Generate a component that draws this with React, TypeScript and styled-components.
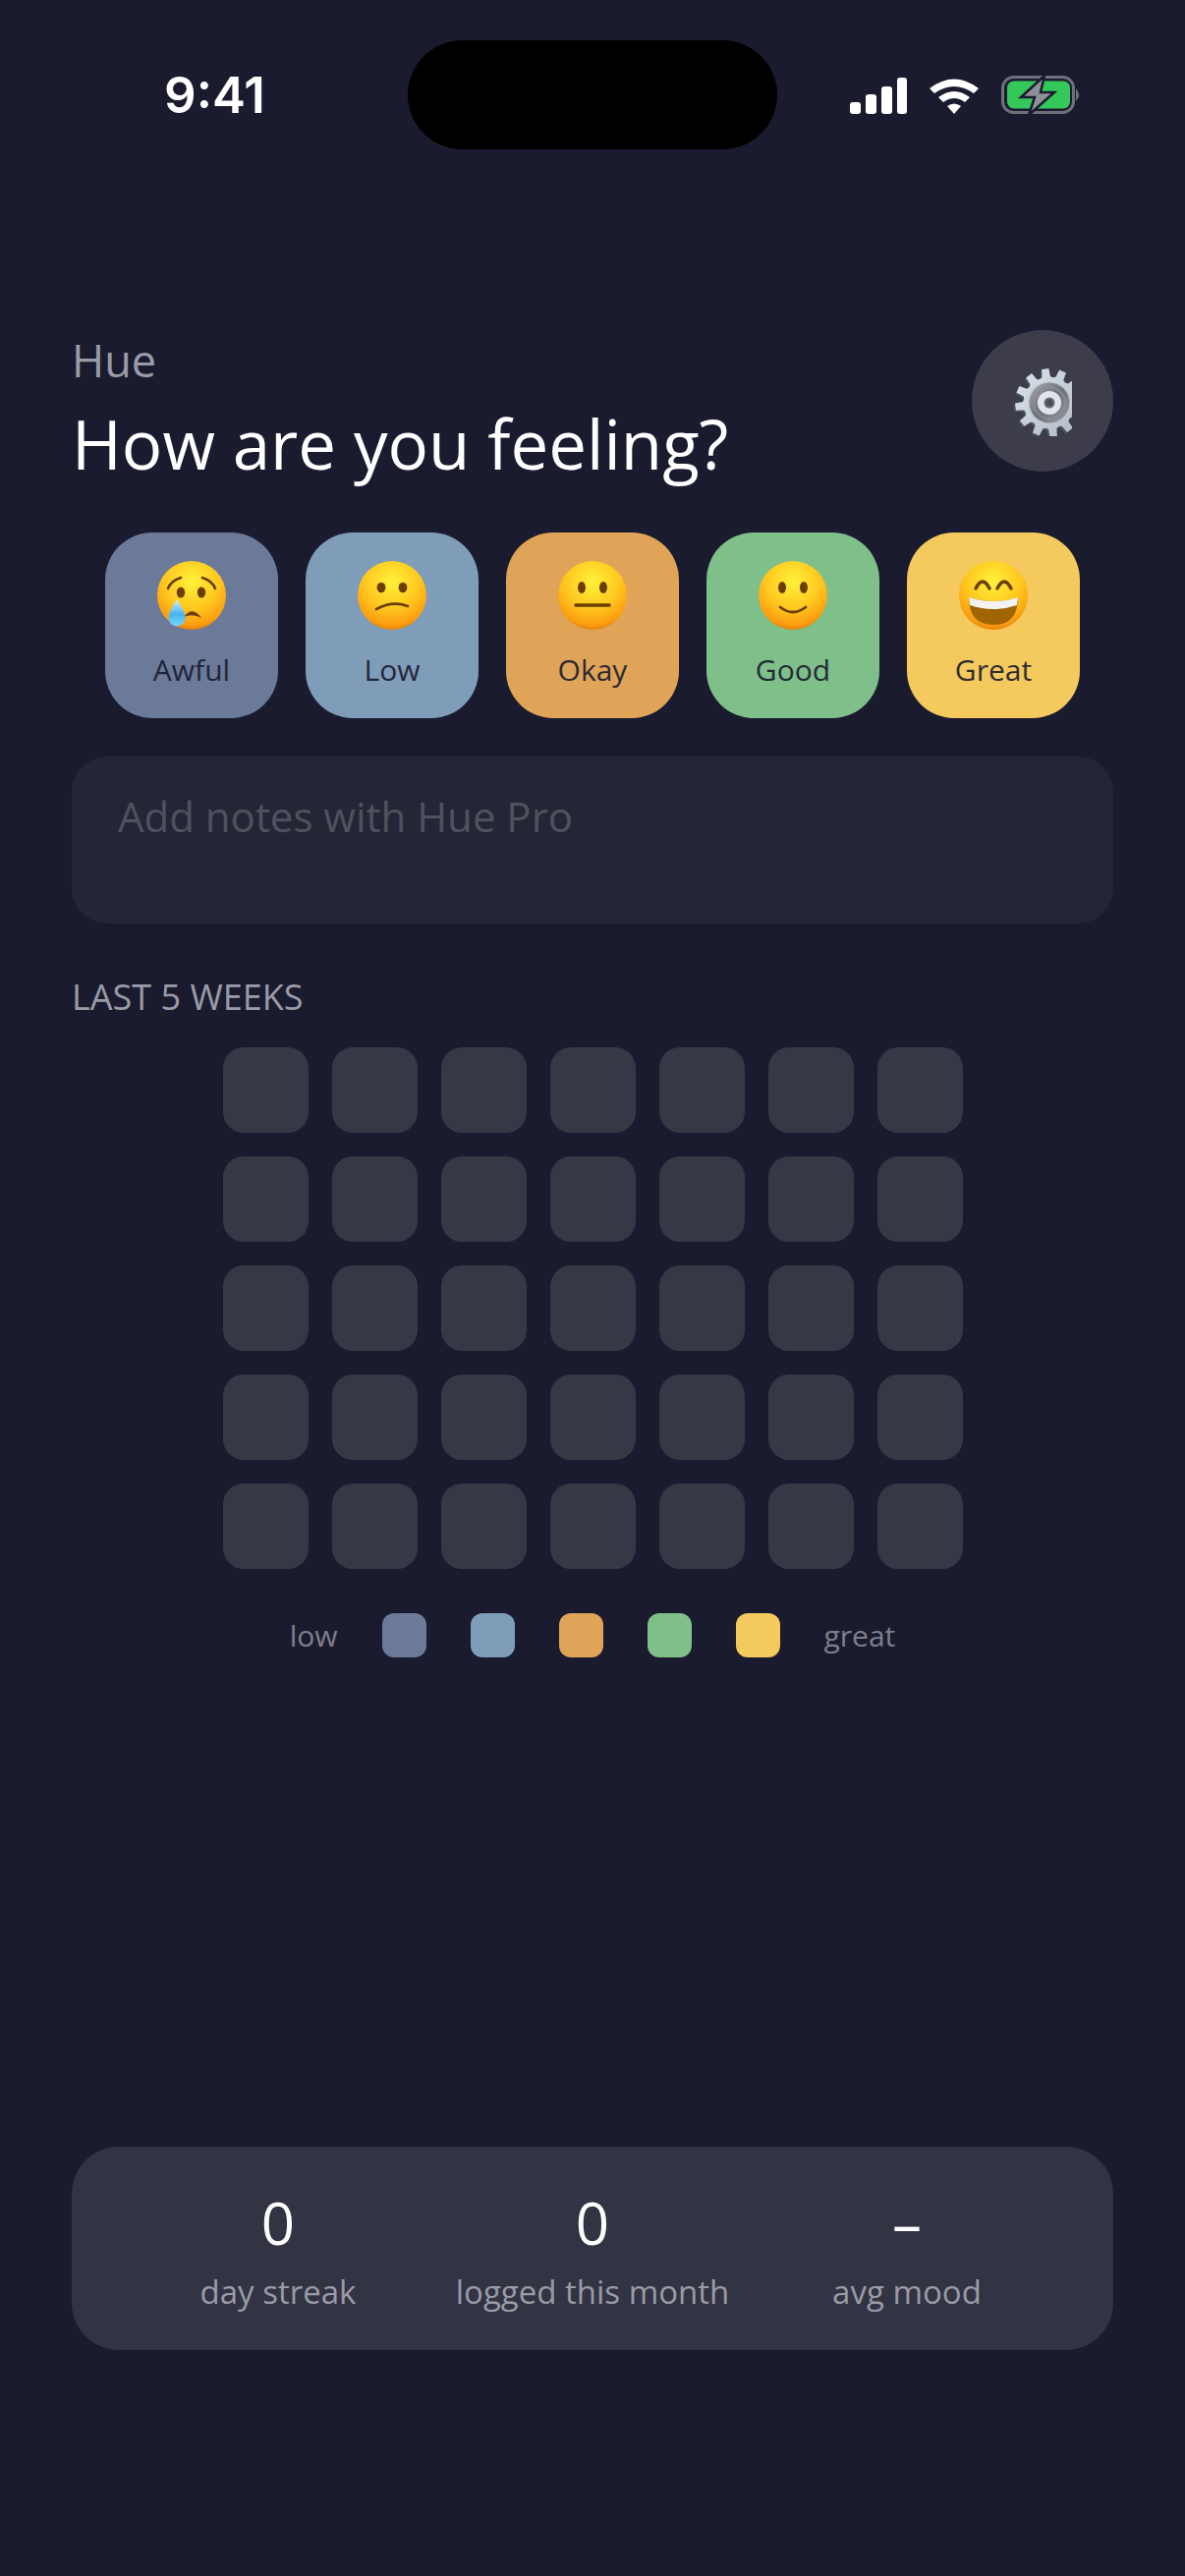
import React from 'react';
import styled, { createGlobalStyle } from 'styled-components';

const GlobalStyle = createGlobalStyle`
  html, body {
    margin: 0;
    padding: 0;
    background: #1a1b2e;
  }
`;

const Screen = styled.div`
  width: 1206px;
  height: 2622px;
  background: #1a1b2e;
  font-family: "Open Sans", "Noto Sans", sans-serif;
  position: relative;
  overflow: hidden;
`;

const StatusBar = styled.div`
  height: 193px;
  padding-top: 41px;
  box-sizing: border-box;
  display: grid;
  grid-template-columns: 415px 376px 415px;
  align-items: start;
`;

const Time = styled.div`
  font-family: "Inter", "Liberation Sans", sans-serif;
  font-weight: 600;
  font-size: 51px;
  line-height: 60px;
  color: #fff;
  text-align: center;
  padding: 26px 0 0 22px;
`;

const Island = styled.div`
  height: 111px;
  border-radius: 56px;
  background: #000;
`;

const StatusIcons = styled.div`
  display: flex;
  align-items: center;
  gap: 23px;
  padding: 36px 0 0 74px;
`;

const Main = styled.div`
  padding: 143px 73px 0;
`;

const Header = styled.div`
  display: flex;
  justify-content: space-between;
  align-items: flex-start;
`;

const Brand = styled.div`
  font-size: 45px;
  line-height: 56px;
  color: #9a9ba6;
  margin-top: 3px;
`;

const Title = styled.h1`
  margin: 10px 0 0;
  font-size: 69px;
  line-height: 92px;
  font-weight: 400;
  color: #fff;
`;

const SettingsButton = styled.div`
  width: 144px;
  height: 144px;
  border-radius: 50%;
  background: #3c3c4a;
  display: flex;
  align-items: center;
  justify-content: center;
`;

const MoodRow = styled.div`
  display: flex;
  justify-content: center;
  gap: 28px;
  margin-top: 45px;
`;

const MoodCard = styled.div<{ $color: string }>`
  width: 176px;
  height: 189px;
  border-radius: 48px;
  background: ${(p) => p.$color};
  display: flex;
  flex-direction: column;
  align-items: center;
  box-sizing: border-box;
  padding-top: 28px;
`;

const MoodLabel = styled.div`
  font-size: 30px;
  line-height: 40px;
  color: #1a1b2e;
  margin-top: 20px;
  opacity: 0.9;
`;

const NotesBox = styled.div`
  margin-top: 39px;
  height: 170px;
  border-radius: 36px;
  background: #242636;
  box-sizing: border-box;
  padding: 33px 47px;
  font-size: 42px;
  line-height: 56px;
  color: #50515f;
`;

const SectionLabel = styled.div`
  margin-top: 52px;
  font-size: 36px;
  line-height: 46px;
  color: #9a9ba6;
`;

const WeekGrid = styled.div`
  display: grid;
  grid-template-columns: repeat(7, 87px);
  grid-auto-rows: 87px;
  gap: 24px;
  justify-content: center;
  margin-top: 28px;
`;

const DayCell = styled.div`
  border-radius: 21px;
  background: #363846;
`;

const Legend = styled.div`
  display: flex;
  justify-content: center;
  align-items: center;
  gap: 45px;
  margin-top: 45px;
`;

const LegendText = styled.div`
  font-size: 30px;
  line-height: 45px;
  color: #7e7f8b;
`;

const LegendSwatch = styled.div<{ $color: string }>`
  width: 45px;
  height: 45px;
  border-radius: 12px;
  background: ${(p) => p.$color};
`;

const StatsCard = styled.div`
  position: absolute;
  left: 73px;
  top: 2185px;
  width: 1060px;
  height: 207px;
  border-radius: 48px;
  background: #323343;
  display: grid;
  grid-template-columns: repeat(3, 320px);
  justify-content: center;
  align-items: center;
  box-sizing: border-box;
  padding-top: 3px;
`;

const Stat = styled.div`
  display: flex;
  flex-direction: column;
  align-items: center;
  gap: 10px;
`;

const StatValue = styled.div`
  font-size: 60px;
  line-height: 76px;
  color: #fff;
`;

const StatLabel = styled.div`
  font-size: 33px;
  line-height: 46px;
  color: #9a9ba6;
`;

const moods = [
  { label: 'Awful', color: '#6b7a99' },
  { label: 'Low', color: '#7f9db9' },
  { label: 'Okay', color: '#dfa458' },
  { label: 'Good', color: '#7fbf8a' },
  { label: 'Great', color: '#f4c95d' },
];

// 12 toothed cog outline around the origin
const gearPath = () => {
  const pts: string[] = [];
  for (let i = 0; i < 12; i++) {
    const a = ((i * 30 - 97) * Math.PI) / 180;
    const step = Math.PI / 180;
    const at = (deg: number, r: number) =>
      `${(Math.cos(a + deg * step) * r).toFixed(2)} ${(Math.sin(a + deg * step) * r).toFixed(2)}`;
    pts.push(at(-15, 26), at(-9, 27), at(-6, 35), at(6, 35), at(9, 27), at(15, 26));
  }
  return `M${pts.join(' L')} Z`;
};

const Gear: React.FC = () => (
  <svg width="60" height="72" viewBox="0 0 60 72">
    <defs>
      <linearGradient id="gear-disc" x1="0" y1="0" x2="1" y2="1">
        <stop offset="0%" stopColor="#a9adb2" />
        <stop offset="50%" stopColor="#6d7177" />
        <stop offset="100%" stopColor="#9a9ea4" />
      </linearGradient>
      <linearGradient id="gear-body" x1="0" y1="0" x2="1" y2="1">
        <stop offset="0%" stopColor="#dde4ea" />
        <stop offset="100%" stopColor="#aeb9c4" />
      </linearGradient>
    </defs>
    <g transform="translate(37 38)">
      <path d={gearPath()} fill="#4c5660" transform="translate(-1.5 1.5)" />
      <path d={gearPath()} fill="url(#gear-body)" />
      <circle r="22" fill="#c2cad2" />
      <circle r="20.5" fill="url(#gear-disc)" />
      <circle r="16" fill="none" stroke="#8a8e94" strokeWidth="1.5" />
      <circle r="12" fill="#dfe5ea" />
      <circle r="5.5" fill="#666a72" />
      <circle r="3.5" fill="#4c4f57" />
    </g>
  </svg>
);

const Face: React.FC<{ kind: string }> = ({ kind }) => (
  <svg width="72" height="72" viewBox="0 0 72 72">
    <defs>
      <radialGradient id={`face-${kind}`} cx="50%" cy="30%" r="72%">
        <stop offset="0%" stopColor="#fff23a" />
        <stop offset="55%" stopColor="#ffc71f" />
        <stop offset="88%" stopColor="#fb9c10" />
        <stop offset="100%" stopColor="#e07a06" />
      </radialGradient>
      <linearGradient id={`tear-${kind}`} x1="0" y1="0" x2="0" y2="1">
        <stop offset="0%" stopColor="#d6f3ff" />
        <stop offset="55%" stopColor="#45b4f2" />
        <stop offset="100%" stopColor="#7fd6ff" />
      </linearGradient>
    </defs>
    <circle cx="36" cy="36" r="35" fill={`url(#face-${kind})`} />
    {kind === 'Awful' && (
      <g>
        <path d="M12 29 Q15 21 25 18" fill="none" stroke="#6b3e00" strokeWidth="2.6" strokeLinecap="round" />
        <path d="M47 18 Q57 21 60 29" fill="none" stroke="#6b3e00" strokeWidth="2.6" strokeLinecap="round" />
        <ellipse cx="25" cy="33" rx="4.2" ry="5.6" fill="#6b3e00" />
        <ellipse cx="46" cy="33" rx="4.2" ry="5.6" fill="#6b3e00" />
        <path d="M28 58 Q37 46 46 59 Q37 54 28 58 Z" fill="#6b3e00" />
        <path d="M21 40 Q30 54 29.5 59 A8.5 8.5 0 0 1 12.5 59 Q12 54 21 40 Z" fill={`url(#tear-${kind})`} />
      </g>
    )}
    {kind === 'Low' && (
      <g>
        <ellipse cx="25" cy="28" rx="4.4" ry="5.2" fill="#6b3e00" />
        <ellipse cx="47" cy="28" rx="4.4" ry="5.2" fill="#6b3e00" />
        <path d="M20 50 Q36 41 52 47" fill="none" stroke="#6b3e00" strokeWidth="2.6" strokeLinecap="round" />
      </g>
    )}
    {kind === 'Okay' && (
      <g>
        <ellipse cx="25" cy="28" rx="4" ry="6" fill="#6b3e00" />
        <ellipse cx="47" cy="28" rx="4" ry="6" fill="#6b3e00" />
        <path d="M19 46 H53" stroke="#6b3e00" strokeWidth="3.6" strokeLinecap="round" />
      </g>
    )}
    {kind === 'Good' && (
      <g>
        <ellipse cx="25" cy="28" rx="4" ry="6" fill="#6b3e00" />
        <ellipse cx="47" cy="28" rx="4" ry="6" fill="#6b3e00" />
        <path d="M23 48 Q36 58 49 48" fill="none" stroke="#6b3e00" strokeWidth="2.8" strokeLinecap="round" />
      </g>
    )}
    {kind === 'Great' && (
      <g>
        <path d="M18 29 Q25 15 32 29" fill="none" stroke="#6b3e00" strokeWidth="3.4" strokeLinecap="round" />
        <path d="M40 29 Q47 15 54 29" fill="none" stroke="#6b3e00" strokeWidth="3.4" strokeLinecap="round" />
        <path d="M11 38 Q36 46 61 38 Q61 66 36 66 Q11 66 11 38 Z" fill="#a06400" />
        <path d="M11 38 Q36 46 61 38 L60 46 Q36 54 12 46 Z" fill="#f2f2f2" />
      </g>
    )}
  </svg>
);

const App: React.FC = () => (
  <Screen>
    <GlobalStyle />
    <StatusBar>
      <Time>9:41</Time>
      <Island />
      <StatusIcons>
        <svg width="58" height="37" viewBox="0 0 58 37" fill="#fff">
          <rect x="0" y="25" width="11" height="12" rx="3" />
          <rect x="16" y="17" width="11" height="20" rx="3" />
          <rect x="32" y="9" width="11" height="28" rx="3" />
          <rect x="48" y="0" width="10" height="37" rx="3" />
        </svg>
        <svg width="50" height="37" viewBox="0 0 50 37" fill="#fff">
          <path d="M0 11 Q25 -8 50 11 L45 16 Q25 2 5 16 Z" />
          <path d="M9 20 Q25 8 41 20 L36 25 Q25 17 14 25 Z" />
          <path d="M18 29 Q25 24 32 29 L25 37 Z" />
        </svg>
        <svg width="82" height="40" viewBox="0 0 82 40">
          <rect x="1.5" y="1.5" width="72" height="36" rx="11" fill="none" stroke="#6f707b" strokeWidth="3" />
          <rect x="6" y="5.5" width="64" height="28" rx="7" fill="#34c759" />
          <path d="M76 13 Q82 19.5 76 26 Z" fill="#6f707b" />
          <path d="M44 0 L20 22 H34 L28 40 L54 17 H40 Z" fill="#8e8f98" stroke="#1a1b2e" strokeWidth="2.5" />
        </svg>
      </StatusIcons>
    </StatusBar>
    <Main>
      <Header>
        <div>
          <Brand>Hue</Brand>
          <Title>How are you feeling?</Title>
        </div>
        <SettingsButton>
          <Gear />
        </SettingsButton>
      </Header>
      <MoodRow>
        {moods.map((m) => (
          <MoodCard key={m.label} $color={m.color}>
            <Face kind={m.label} />
            <MoodLabel>{m.label}</MoodLabel>
          </MoodCard>
        ))}
      </MoodRow>
      <NotesBox>Add notes with Hue Pro</NotesBox>
      <SectionLabel>LAST 5 WEEKS</SectionLabel>
      <WeekGrid>
        {Array.from({ length: 35 }).map((_, i) => (
          <DayCell key={i} />
        ))}
      </WeekGrid>
      <Legend>
        <LegendText>low</LegendText>
        {moods.map((m) => (
          <LegendSwatch key={m.label} $color={m.color} />
        ))}
        <LegendText>great</LegendText>
      </Legend>
    </Main>
    <StatsCard>
      <Stat>
        <StatValue>0</StatValue>
        <StatLabel>day streak</StatLabel>
      </Stat>
      <Stat>
        <StatValue>0</StatValue>
        <StatLabel>logged this month</StatLabel>
      </Stat>
      <Stat>
        <StatValue>–</StatValue>
        <StatLabel>avg mood</StatLabel>
      </Stat>
    </StatsCard>
  </Screen>
);

export default App;
